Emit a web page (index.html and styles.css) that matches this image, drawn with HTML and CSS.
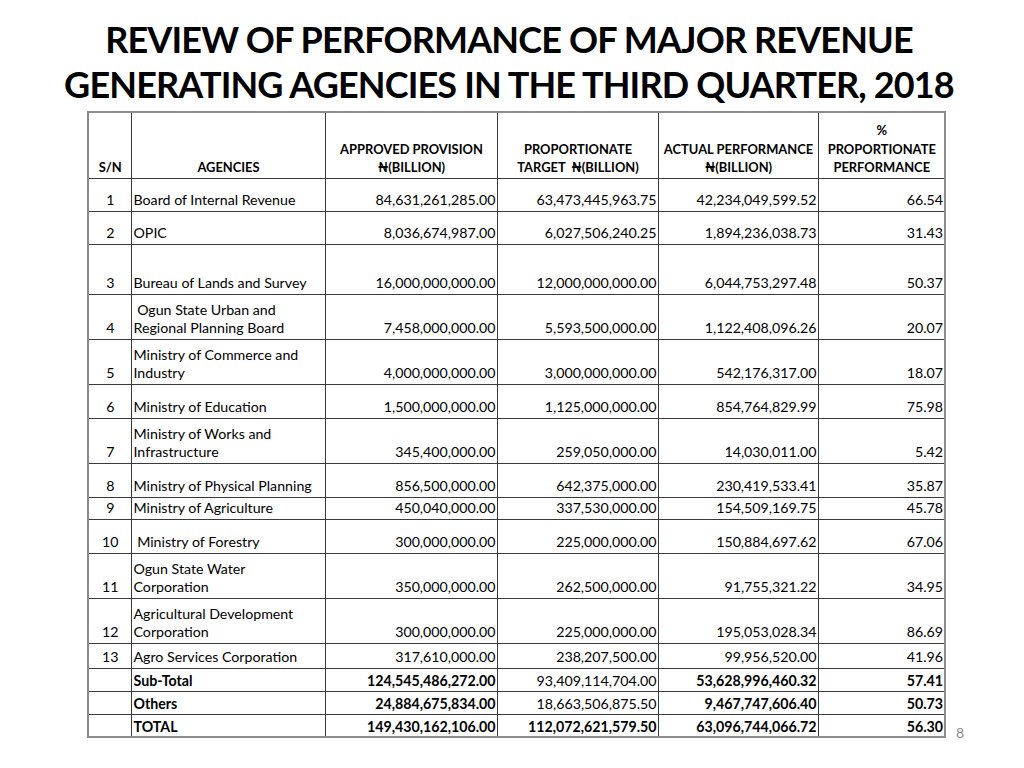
FILE: index.html
```html
<!DOCTYPE html>
<html>
<head>
<meta charset="utf-8">
<link rel="stylesheet" href="styles.css">
</head>
<body>
<div class="slide">
  <h1 class="title">REVIEW OF PERFORMANCE OF MAJOR REVENUE<br>GENERATING AGENCIES IN THE THIRD QUARTER, 2018</h1>
  <div class="table-wrap">
    <table class="grid">
      <colgroup>
        <col class="c-sn"><col class="c-ag"><col class="c-ap"><col class="c-pt"><col class="c-ac"><col class="c-pc">
      </colgroup>
      <thead>
        <tr class="h66">
          <th>S/N</th>
          <th>AGENCIES</th>
          <th>APPROVED PROVISION<br>₦(BILLION)</th>
          <th>PROPORTIONATE<br>TARGET&nbsp; ₦(BILLION)</th>
          <th>ACTUAL PERFORMANCE<br>₦(BILLION)</th>
          <th>%<br>PROPORTIONATE<br>PERFORMANCE</th>
        </tr>
      </thead>
      <tbody>
        <tr class="h33"><td class="sn">1</td><td>Board of Internal Revenue</td><td class="num">84,631,261,285.00</td><td class="num">63,473,445,963.75</td><td class="num">42,234,049,599.52</td><td class="num">66.54</td></tr>
        <tr class="h33"><td class="sn">2</td><td>OPIC</td><td class="num">8,036,674,987.00</td><td class="num">6,027,506,240.25</td><td class="num">1,894,236,038.73</td><td class="num">31.43</td></tr>
        <tr class="h50"><td class="sn">3</td><td>Bureau of Lands and Survey</td><td class="num">16,000,000,000.00</td><td class="num">12,000,000,000.00</td><td class="num">6,044,753,297.48</td><td class="num">50.37</td></tr>
        <tr class="h45"><td class="sn">4</td><td>&nbsp;Ogun State Urban and<br>Regional Planning Board</td><td class="num">7,458,000,000.00</td><td class="num">5,593,500,000.00</td><td class="num">1,122,408,096.26</td><td class="num">20.07</td></tr>
        <tr class="h45"><td class="sn">5</td><td>Ministry of Commerce and<br>Industry</td><td class="num">4,000,000,000.00</td><td class="num">3,000,000,000.00</td><td class="num">542,176,317.00</td><td class="num">18.07</td></tr>
        <tr class="h34"><td class="sn">6</td><td>Ministry of Education</td><td class="num">1,500,000,000.00</td><td class="num">1,125,000,000.00</td><td class="num">854,764,829.99</td><td class="num">75.98</td></tr>
        <tr class="h45"><td class="sn">7</td><td>Ministry of Works and<br>Infrastructure</td><td class="num">345,400,000.00</td><td class="num">259,050,000.00</td><td class="num">14,030,011.00</td><td class="num">5.42</td></tr>
        <tr class="h34"><td class="sn">8</td><td>Ministry of Physical Planning</td><td class="num">856,500,000.00</td><td class="num">642,375,000.00</td><td class="num">230,419,533.41</td><td class="num">35.87</td></tr>
        <tr class="h22"><td class="sn">9</td><td>Ministry of Agriculture</td><td class="num">450,040,000.00</td><td class="num">337,530,000.00</td><td class="num">154,509,169.75</td><td class="num">45.78</td></tr>
        <tr class="h34"><td class="sn">10</td><td>&nbsp;Ministry of Forestry</td><td class="num">300,000,000.00</td><td class="num">225,000,000.00</td><td class="num">150,884,697.62</td><td class="num">67.06</td></tr>
        <tr class="h45"><td class="sn">11</td><td>Ogun State Water<br>Corporation</td><td class="num">350,000,000.00</td><td class="num">262,500,000.00</td><td class="num">91,755,321.22</td><td class="num">34.95</td></tr>
        <tr class="h45"><td class="sn">12</td><td>Agricultural Development<br>Corporation</td><td class="num">300,000,000.00</td><td class="num">225,000,000.00</td><td class="num">195,053,028.34</td><td class="num">86.69</td></tr>
        <tr class="h25"><td class="sn">13</td><td>Agro Services Corporation</td><td class="num">317,610,000.00</td><td class="num">238,207,500.00</td><td class="num">99,956,520.00</td><td class="num">41.96</td></tr>
        <tr class="h23 tight"><td class="sn"></td><td class="b">Sub-Total</td><td class="num b">124,545,486,272.00</td><td class="num">93,409,114,704.00</td><td class="num b">53,628,996,460.32</td><td class="num b">57.41</td></tr>
        <tr class="h23 tight"><td class="sn"></td><td class="b">Others</td><td class="num b">24,884,675,834.00</td><td class="num">18,663,506,875.50</td><td class="num b">9,467,747,606.40</td><td class="num b">50.73</td></tr>
        <tr class="h23 tight"><td class="sn"></td><td class="b">TOTAL</td><td class="num b">149,430,162,106.00</td><td class="num b">112,072,621,579.50</td><td class="num b">63,096,744,066.72</td><td class="num b">56.30</td></tr>
      </tbody>
    </table>
    <div class="page-no">8</div>
  </div>
</div>
</body>
</html>
```

FILE: styles.css
```css
html, body {
  margin: 0;
  padding: 0;
  background: #ffffff;
}

.slide {
  width: 1024px;
  height: 768px;
  overflow: hidden;
  font-family: Lato, "DejaVu Sans", sans-serif;
  color: #000000;
}

.title {
  margin: 0;
  padding: 17px 0 0 0;
  text-align: center;
  font-size: 36px;
  line-height: 45px;
  font-weight: 700;
  letter-spacing: -0.85px;
  width: 1018px;
}

.table-wrap {
  display: flex;
  align-items: flex-end;
  margin: 4px 0 0 87px;
}

.grid {
  border-collapse: collapse;
  table-layout: fixed;
  width: 857px;
  border: 2px solid #8c8c8c;
  font-size: 14.2px;
}

.c-sn { width: 43px; }
.c-ag { width: 194px; }
.c-ap { width: 172px; }
.c-pt { width: 161px; }
.c-ac { width: 160px; }
.c-pc { width: 127px; }

.grid th,
.grid td {
  border: 1px solid #3a3a3a;
  vertical-align: bottom;
  padding: 0 1px 1px 2px;
  line-height: 18.5px;
  white-space: nowrap;
  overflow: hidden;
}

.grid th {
  font-weight: 700;
  font-size: 12.9px;
  text-align: center;
  padding-bottom: 1px;
}

.grid td.sn { text-align: center; }
.grid td.num { text-align: right; }
.grid td.b { font-weight: 700; }

.grid .tight td { padding-bottom: 0; }

.h66 { height: 66px; }
.h50 { height: 50px; }
.h45 { height: 45px; }
.h34 { height: 34px; }
.h33 { height: 33px; }
.h25 { height: 25px; }
.h23 { height: 23px; }
.h22 { height: 22px; }

.page-no {
  color: #8c8c8c;
  font-size: 14px;
  margin-left: 10px;
  margin-bottom: -3px;
}
```
